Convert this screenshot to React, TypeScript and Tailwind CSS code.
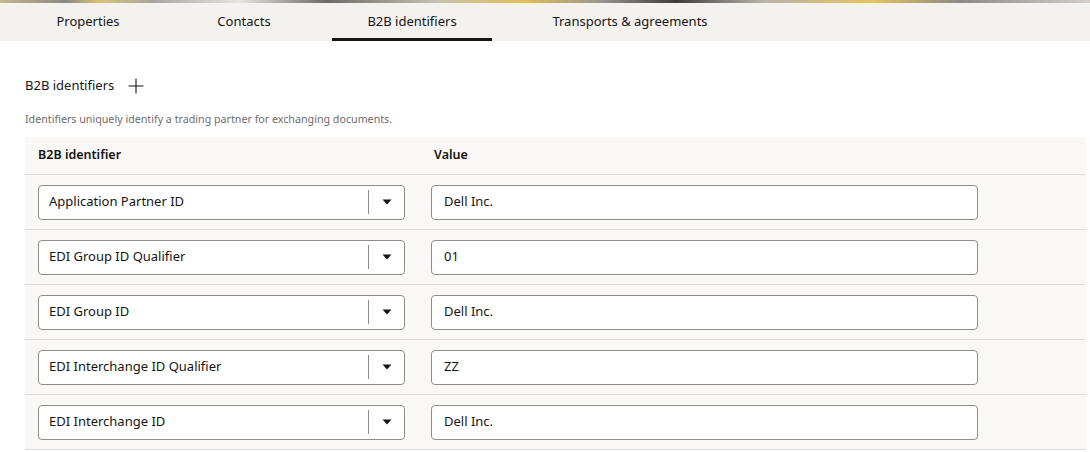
import { Plus } from "lucide-react";

const tabs = [
  { label: "Properties", w: "w-[136px]" },
  { label: "Contacts", w: "w-[176px]" },
  { label: "B2B identifiers", w: "w-[160px]", active: true },
  { label: "Transports & agreements", w: "w-[276px]" },
];

const rows = [
  { id: "Application Partner ID", value: "Dell Inc." },
  { id: "EDI Group ID Qualifier", value: "01" },
  { id: "EDI Group ID", value: "Dell Inc." },
  { id: "EDI Interchange ID Qualifier", value: "ZZ" },
  { id: "EDI Interchange ID", value: "Dell Inc." },
];

function Select({ label }: { label: string }) {
  return (
    <div className="flex h-[35px] w-[367px] items-center rounded-[4px] border border-[#8f8c89] bg-white">
      <span className="flex-1 pl-[10px] text-[13px] text-[#161513]">{label}</span>
      <div className="h-[24px] w-px bg-[#8f8c89]" />
      <div className="flex w-[35px] items-center justify-center">
        <svg width="10" height="6" viewBox="0 0 10 6">
          <path d="M0.5 0.5h9L5 5.5z" fill="#161513" />
        </svg>
      </div>
    </div>
  );
}

export default function App() {
  return (
    <div className="h-[452px] w-[1090px] overflow-hidden bg-white font-['Noto_Sans',sans-serif] text-[#161513]">
      {/* decorative strip */}
      <div className="h-[3px] bg-[linear-gradient(90deg,#c9b68a,#8a8782_6%,#d8c27a_9%,#a9a6a0_14%,#e7e4de_22%,#6d6a66_30%,#c8c1b3_40%,#e2bf55_48%,#9a968f_55%,#3f3d3a_62%,#b8b3aa_70%,#e6c35c_80%,#8c8985_88%,#d3cfc8_100%)]" />
      {/* tabs */}
      <div className="flex h-[38px] bg-[#f4f2ef] pl-[20px]">
        {tabs.map((t) => (
          <div
            key={t.label}
            className={`${t.w} flex items-center justify-center text-[13px] ${
              t.active ? "border-b-[3px] border-[#161513] pt-[3px]" : ""
            }`}
          >
            {t.label}
          </div>
        ))}
      </div>

      <div className="pl-[25px] pr-[4px]">
        <div className="mt-[35px] flex h-[20px] items-center gap-[10px]">
          <span className="text-[13px]">B2B identifiers</span>
          <Plus className="h-[24px] w-[24px] shrink-0" strokeWidth={1.1} />
        </div>
        <p className="mt-[15px] text-[10.7px] text-[#6f6c69]">
          Identifiers uniquely identify a trading partner for exchanging documents.
        </p>

        <div className="mt-[10px] bg-[#f9f8f6]">
          <div className="flex h-[38px] items-center border-b border-[#dfdcd8] pl-[13px] text-[12.5px] font-semibold">
            <span className="w-[396px]">B2B identifier</span>
            <span>Value</span>
          </div>
          {rows.map((r) => (
            <div
              key={r.id}
              className="flex h-[55px] items-center gap-[26px] border-b border-[#dfdcd8] pl-[13px]"
            >
              <Select label={r.id} />
              <div className="flex h-[35px] w-[547px] items-center rounded-[4px] border border-[#8f8c89] bg-white pl-[12px] text-[13px]">
                {r.value}
              </div>
            </div>
          ))}
        </div>
      </div>
    </div>
  );
}
